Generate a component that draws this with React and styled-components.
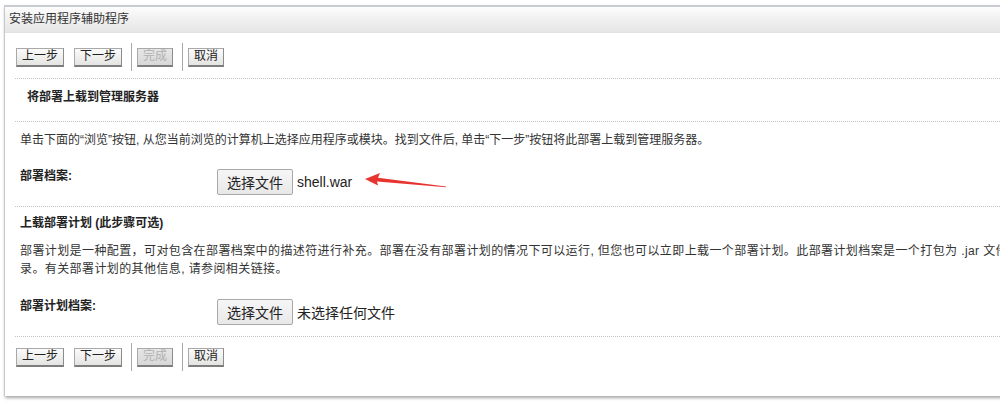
import React from "react";
import styled, { createGlobalStyle } from "styled-components";

const Global = createGlobalStyle`
  html, body {
    margin: 0;
    padding: 0;
    background: #fff;
    overflow: hidden;
  }
  body {
    font-family: "Liberation Sans", "Noto Sans CJK SC", sans-serif;
    color: #333;
  }
`;

const Page = styled.div`
  width: 1000px;
  height: 414px;
  overflow: hidden;
  padding: 5px 0 0 4px;
  box-sizing: border-box;
`;

const Panel = styled.div`
  width: 1060px;
  height: 391px;
  border-left: 1px solid #c8c8c8;
  border-top: 2px solid #c9cdd3;
  box-sizing: border-box;
  box-shadow: 1px 2px 3px rgba(0, 0, 0, 0.35);
  background: #fff;
`;

const Header = styled.div`
  height: 25px;
  line-height: 25px;
  padding-left: 4px;
  font-size: 12px;
  color: #333;
  background: linear-gradient(#fdfdfd 0%, #f1f1f1 45%, #e5e6e5 100%);
  border-bottom: 1px solid #e2e2e2;
`;

const Body = styled.div`
  padding: 7px 0 0 10px;
`;

const Toolbar = styled.div`
  display: flex;
  align-items: center;
  height: 30px;
  padding-left: 1px;
  margin: ${(p) => p.$margin || "0"};
`;

const Btn = styled.button`
  height: 19px;
  padding: 0 5px;
  margin-right: 10px;
  font-family: inherit;
  font-size: 12px;
  line-height: 15px;
  color: ${(p) => (p.disabled ? "#b0b0b0" : "#222")};
  background: ${(p) =>
    p.disabled
      ? "linear-gradient(#e6e6e6, #d8d8d8)"
      : "linear-gradient(#fbfbfb, #e4e4e2)"};
  border: 1px solid #a9a9a9;
  border-right-color: #8c8c8c;
  border-bottom: 2px solid #7d7d7d;
  border-radius: 0;
  box-sizing: border-box;
  cursor: pointer;
`;

const Sep = styled.div`
  width: 1px;
  height: 28px;
  background: #a8a8a8;
  margin: 0 5px 0 -1px;
`;

const Divider = styled.div`
  border-top: 1px dotted #c4c4c4;
  margin: ${(p) => p.$margin || "0"};
`;

const Heading = styled.div`
  font-size: 12px;
  line-height: 14px;
  font-weight: bold;
  color: #222;
  padding: ${(p) => p.$pad || "0"};
  height: ${(p) => p.$h || "42px"};
  box-sizing: border-box;
`;

const Text = styled.p`
  margin: ${(p) => p.$margin || "0"};
  padding: 0 0 0 5px;
  width: 1020px;
  font-size: 12px;
  line-height: 18px;
  letter-spacing: ${(p) => p.$spacing || "0"};
  color: #333;
`;

const FieldRow = styled.div`
  position: relative;
  display: grid;
  grid-template-columns: 197px auto;
  align-items: start;
  padding-left: 5px;
  margin: ${(p) => p.$margin || "0"};
`;

const Label = styled.div`
  font-size: 12px;
  line-height: 14px;
  font-weight: bold;
  color: #222;
`;

const FilePick = styled.div`
  display: flex;
  align-items: center;
  gap: 4px;
  font-size: 14px;
  color: #222;
`;

const FileBtn = styled.button`
  height: 26px;
  padding: 0 9px;
  font-family: inherit;
  font-size: 14px;
  color: #222;
  background: linear-gradient(#f6f6f6, #e8e8e8);
  border: 1px solid #a8a8a8;
  border-radius: 2px;
  box-sizing: border-box;
`;

const Arrow = styled.svg`
  position: absolute;
  left: 341px;
  top: 1px;
  overflow: visible;
`;

const Toolbars = () => (
  <>
    <Btn>上一步</Btn>
    <Btn>下一步</Btn>
    <Sep />
    <Btn disabled>完成</Btn>
    <Sep />
    <Btn>取消</Btn>
  </>
);

export default function App() {
  return (
    <Page>
      <Global />
      <Panel>
        <Header>安装应用程序辅助程序</Header>
        <Body>
          <Toolbar $margin="2px 0 6px">
            <Toolbars />
          </Toolbar>
          <Divider />
          <Heading $pad="11px 0 0 12px">将部署上载到管理服务器</Heading>
          <Divider />
          <Text $margin="9px 0 0">
            单击下面的“浏览”按钮, 从您当前浏览的计算机上选择应用程序或模块。找到文件后, 单击“下一步”按钮将此部署上载到管理服务器。
          </Text>
          <FieldRow $margin="20px 0 11px">
            <Label>部署档案:</Label>
            <FilePick>
              <FileBtn>选择文件</FileBtn>
              <span>shell.war</span>
            </FilePick>
            <Arrow width="90" height="20" viewBox="0 0 90 20">
              <path
                d="M9 9 L24 3 L22 7.8 L90 16.5 L90 17.3 L21 11.6 L22 15.5 Z"
                fill="#e8342e"
              />
            </Arrow>
          </FieldRow>
          <Divider />
          <Heading $pad="9px 0 0 5px" $h="35px">上载部署计划 (此步骤可选)</Heading>
          <Text $spacing="0.4px">
            部署计划是一种配置，可对包含在部署档案中的描述符进行补充。部署在没有部署计划的情况下可以运行, 但您也可以立即上载一个部署计划。此部署计划档案是一个打包为 .jar 文件的目录。有关部署计划的其他信息, 请参阅相关链接。
          </Text>
          <FieldRow $margin="21px 0 11px">
            <Label>部署计划档案:</Label>
            <FilePick>
              <FileBtn>选择文件</FileBtn>
              <span>未选择任何文件</span>
            </FilePick>
          </FieldRow>
          <Divider />
          <Toolbar $margin="5px 0 0">
            <Toolbars />
          </Toolbar>
        </Body>
      </Panel>
    </Page>
  );
}
